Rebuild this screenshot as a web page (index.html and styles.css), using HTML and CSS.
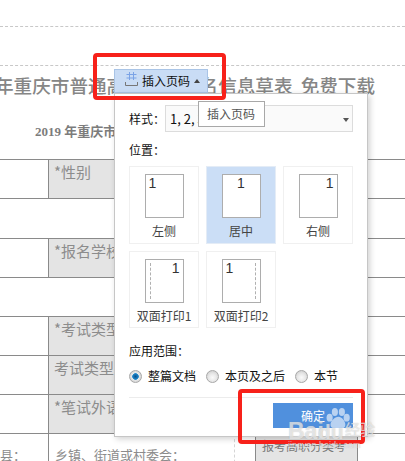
FILE: index.html
```html
<!DOCTYPE html>
<html lang="zh">
<head>
<meta charset="utf-8">
<title>插入页码</title>
<link rel="stylesheet" href="styles.css">
</head>
<body>
<main class="doc">
  <div class="rule rule-a"></div>
  <div class="rule rule-b"></div>
  <h1 class="doc-title">年重庆市普通高中招生报名信息草表 免费下载</h1>
  <h2 class="doc-sub">2019 年重庆市普通高中招生报名信息草表</h2>
  <section class="form">
    <div class="row row-short"><span></span><div class="cell shade">*性别</div></div>
    <div class="row row-tall"></div>
    <div class="row row-short"><span></span><div class="cell shade">*报名学校</div></div>
    <div class="row row-short"></div>
    <div class="row row-short"><span></span><div class="cell shade">*考试类型</div></div>
    <div class="row row-short"><span></span><div class="cell shade">考试类型下</div></div>
    <div class="row row-short"><span></span><div class="cell shade">*笔试外语</div></div>
    <div class="row row-last">
      <div class="plain">县：</div>
      <div class="plain town">乡镇、街道或村委会：</div>
      <div class="dashed"></div>
      <div class="cell shade boxed">报考高职分类考</div>
    </div>
  </section>
</main>

<button class="tool-btn" type="button">
  <svg class="tool-icon" width="15" height="17" viewBox="0 0 15 17" fill="none">
    <path d="M5.500 1v8M9.500 1v8M2.500 3.500h10M2.500 7h10" stroke="#7ba3e6"/>
    <path d="M1.500 11v3.500h12V11" stroke="#777"/>
  </svg>
  <span>插入页码</span>
  <i class="caret-up"></i>
</button>

<aside class="panel">
  <div class="style-row">
    <span class="label">样式：</span>
    <div class="select">1, 2, 3<i class="caret-down"></i></div>
  </div>
  <div class="label pos-label">位置：</div>
  <div class="tiles">
    <div class="tile">
      <div class="sheet sheet-left">1</div><span>左侧</span>
    </div>
    <div class="tile tile-on">
      <div class="sheet sheet-center">1</div><span>居中</span>
    </div>
    <div class="tile">
      <div class="sheet sheet-right">1</div><span>右侧</span>
    </div>
    <div class="tile">
      <div class="sheet sheet-right fold-left">1</div><span>双面打印1</span>
    </div>
    <div class="tile">
      <div class="sheet sheet-left fold-right">1</div><span>双面打印2</span>
    </div>
  </div>
  <div class="label scope-label">应用范围：</div>
  <div class="radios">
    <span class="radio-item"><i class="radio radio-on"></i>整篇文档</span>
    <span class="radio-item"><i class="radio"></i>本页及之后</span>
    <span class="radio-item"><i class="radio"></i>本节</span>
  </div>
  <div class="divider"></div>
  <div class="actions"><button class="ok" type="button">确定</button></div>
</aside>

<div class="tooltip">插入页码</div>

<div class="mark mark-top"></div>
<div class="mark mark-bottom"></div>

<div class="watermark">
  <span class="wm-bai">Bai</span>
  <svg class="wm-paw" width="25" height="21" viewBox="0 0 28 24" fill="#fff" fill-opacity=".6">
    <ellipse cx="5" cy="11" rx="3.500" ry="4.500"/>
    <ellipse cx="11" cy="4.500" rx="3.500" ry="4.500"/>
    <ellipse cx="19" cy="4.500" rx="3.500" ry="4.500"/>
    <ellipse cx="24.500" cy="11" rx="3.500" ry="4.500"/>
    <path d="M15 10c4 0 8 5 8 9 0 4-4 5-8 4-4 1-9 0-9-4 0-4 5-9 9-9z"/>
  </svg>
  <span class="wm-du">du</span>
  <span class="wm-jy">经验</span>
  <span class="wm-url">jingyan.baidu.com</span>
</div>
</body>
</html>
```
FILE: styles.css
```css
html, body {
  margin: 0;
  width: 405px;
  height: 461px;
  overflow: hidden;
  background: #fff;
  font-family: "Noto Sans CJK SC", "Liberation Sans", sans-serif;
}

.doc { width: 405px; }

.rule { border-top: 1px dashed #c8c8c8; }
.rule-a { margin-top: 26px; }
.rule-b { margin-top: 38px; }

.doc-title {
  margin: 0 0 0 -5px;
  height: 36px;
  line-height: 38px;
  font-size: 18.6px;
  font-weight: 500;
  word-spacing: 4px;
  color: #868686;
  white-space: nowrap;
}

.doc-sub {
  margin: 20px 0 0 35px;
  height: 20px;
  line-height: 20px;
  font-family: "Liberation Serif", "Noto Sans CJK SC", serif;
  font-size: 13px;
  font-weight: 700;
  color: #7c7c7c;
  white-space: nowrap;
}

.form { margin-top: 17px; }

.row {
  display: grid;
  grid-template-columns: 48px 310px;
  box-sizing: border-box;
  border-top: 1px solid #8a8a8a;
}
.row-short { height: 39px; }
.row-tall { height: 40px; }
.row-last {
  height: 40px;
  grid-template-columns: 48px 186px 21px 103px;
}

.cell {
  border-left: 1px solid #8a8a8a;
  padding: 1px 0 0 5px;
  font-size: 15px;
  line-height: 22px;
  color: #8c8c8c;
  white-space: nowrap;
  overflow: hidden;
}
.shade { background: #e4e4e4; }
.boxed {
  border-right: 1px solid #8a8a8a;
  padding: 1px 0 0 6px;
  font-size: 12px;
  color: #777;
}

.plain {
  padding-top: 11px;
  font-family: "Noto Sans CJK TC", sans-serif;
  font-size: 13px;
  line-height: 20px;
  color: #8c8c8c;
  white-space: nowrap;
}
.town {
  border-left: 1px solid #8a8a8a;
  padding-left: 6px;
}
.dashed { border-left: 1px dashed #d5d5d5; }

.tool-btn {
  position: absolute;
  left: 114px;
  top: 69px;
  box-sizing: border-box;
  width: 94px;
  height: 24px;
  padding: 0 0 0 9px;
  display: flex;
  align-items: center;
  background: #c9dcf5;
  border: 1px solid #a9c4e6;
  font: 12px/16px "Noto Sans CJK SC", sans-serif;
  color: #111;
}
.tool-icon { margin-right: 3px; margin-top: -3px; }

.caret-up {
  margin-left: 4px;
  width: 0;
  height: 0;
  border: 3px solid transparent;
  border-top: 0;
  border-bottom: 4px solid #444;
}

.panel {
  position: absolute;
  left: 114px;
  top: 93px;
  box-sizing: border-box;
  width: 254px;
  height: 344px;
  padding: 11px 14px 0;
  background: #fff;
  border: 1px solid #c6c6c6;
  box-shadow: 2px 2px 6px rgba(0, 0, 0, .18);
  font-size: 12px;
  color: #111;
}

.label {
  line-height: 17px;
  font-family: "Noto Sans CJK TC", sans-serif;
}

.style-row {
  display: flex;
  align-items: center;
  justify-content: space-between;
}
.select {
  position: relative;
  box-sizing: border-box;
  width: 188px;
  height: 27px;
  padding-left: 4px;
  line-height: 25px;
  font-size: 13px;
  background: #fafafa;
  border: 1px solid #dcdcdc;
}
.caret-down {
  position: absolute;
  right: 3px;
  top: 12px;
  border: 3px solid transparent;
  border-bottom: 0;
  border-top: 4px solid #555;
}

.pos-label { margin-top: 9px; }

.tiles {
  margin-top: 8px;
  display: grid;
  grid-template-columns: repeat(3, 70px);
  grid-template-rows: 78px 77px;
  gap: 7px;
}
.tile {
  box-sizing: border-box;
  display: flex;
  flex-direction: column;
  align-items: center;
  border: 1px solid #f0f0f0;
  padding-top: 7px;
  color: #444;
}
.tile span { margin-top: 4px; line-height: 17px; white-space: nowrap; }
.tile-on { background: #cbdef6; border-color: #e4ecf6; }

.sheet {
  position: relative;
  box-sizing: border-box;
  width: 39px;
  height: 44px;
  padding: 0 3px;
  background: #fff;
  border: 1px solid #adadad;
  font: 14px/16px "Liberation Sans", sans-serif;
  color: #333;
}
.sheet-left { text-align: left; }
.sheet-center { text-align: center; }
.sheet-right { text-align: right; }
.fold-left::before,
.fold-right::before {
  content: "";
  position: absolute;
  top: 3px;
  bottom: 3px;
  border-left: 1px dashed #b0b0b0;
}
.fold-left::before { left: 4px; }
.fold-right::before { right: 4px; }

.scope-label { margin-top: 15px; line-height: 16px; }

.radios {
  margin-top: 9px;
  display: flex;
  height: 16px;
  line-height: 16px;
  color: #111;
}
.radio-item { display: flex; align-items: center; white-space: nowrap; margin-right: 10px; }
.radio {
  box-sizing: border-box;
  width: 13px;
  height: 13px;
  margin-right: 6px;
  border-radius: 50%;
  border: 1px solid #a8a8a8;
  background: radial-gradient(circle at 50% 60%, #fafafa 0, #e8e8e8 45%, #c4c4c4 100%);
}
.radio-on {
  background: radial-gradient(circle, #0a4f8c 0, #1a7fc0 2.500px, #2a8fd0 3px, #e8e8e8 3.600px, #c4c4c4 100%);
}

.divider { margin-top: 13px; border-top: 1px solid #ececec; }

.actions { margin-top: 5px; display: flex; justify-content: flex-end; }
.ok {
  width: 80px;
  height: 25px;
  padding: 0;
  border: 0;
  background: #5090dd;
  color: #fff;
  font: 12px/25px "Noto Sans CJK SC", sans-serif;
}

.tooltip {
  position: absolute;
  left: 198px;
  top: 101px;
  box-sizing: border-box;
  width: 67px;
  height: 26px;
  padding-left: 8px;
  line-height: 24px;
  font-size: 12px;
  color: #555;
  background: #fff;
  border: 1px solid #a8a8a8;
}

.mark {
  position: absolute;
  box-sizing: border-box;
  border: 4px solid #f7211a;
  border-radius: 4px;
}
.mark-top { left: 93px; top: 53px; width: 133px; height: 47px; }
.mark-bottom { left: 238px; top: 389px; width: 127px; height: 55px; }

.watermark {
  position: absolute;
  left: 288px;
  top: 406px;
  width: 117px;
  height: 46px;
  color: rgba(255, 255, 255, .62);
  text-shadow: 0 0 1px rgba(140, 140, 140, .6);
  font-family: "Liberation Sans", sans-serif;
  font-weight: 700;
}
.wm-bai { position: absolute; left: 0; top: 12px; font-size: 23px; line-height: 26px; }
.wm-paw { position: absolute; left: 37px; top: 2px; }
.wm-du { position: absolute; left: 30px; top: 14px; font-size: 21px; line-height: 24px; }
.wm-jy {
  position: absolute;
  left: 57px;
  top: 13px;
  font: 500 15px/20px "Noto Sans CJK SC", sans-serif;
}
.wm-url {
  position: absolute;
  left: 0;
  top: 33px;
  font-size: 9px;
  line-height: 12px;
  font-weight: 400;
}
```
